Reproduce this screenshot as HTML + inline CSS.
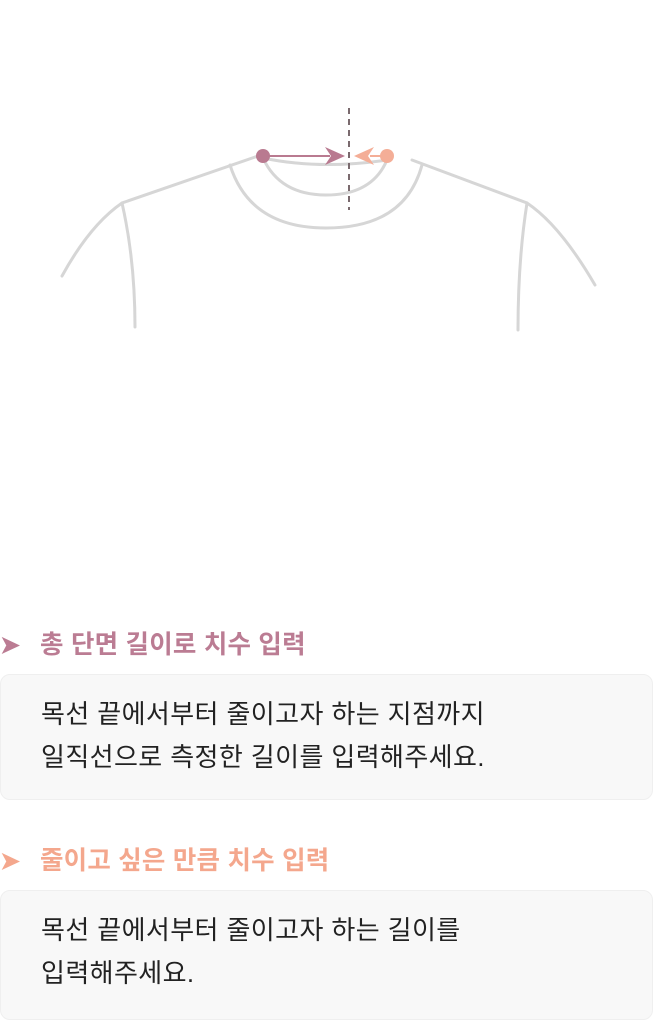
<!DOCTYPE html>
<html><head><meta charset="utf-8"><style>
body{margin:0;width:654px;height:1016px;background:#fff;font-family:"Liberation Sans","Noto Sans CJK KR",sans-serif;position:relative;overflow:hidden}
.h{position:absolute;left:0;font-size:25.5px;font-weight:bold;letter-spacing:0.2px;line-height:28px}
.h span{display:inline-block;width:40px;font-size:24px;letter-spacing:0}
.box{position:absolute;left:0;width:653px;background:#f8f8f8;border:1px solid #efefef;border-radius:10px;box-sizing:border-box;padding:18px 0 0 40px;font-size:26px;letter-spacing:0.4px;line-height:43px;color:#222}
</style></head><body>
<svg width="654" height="400" style="position:absolute;left:0;top:0" fill="none">
<g stroke="#d6d6d6" stroke-width="3" stroke-linecap="round">
<path d="M258 156 L122 203 Q90 225 62 276"/>
<path d="M122 203 Q135 260 135 327"/>
<path d="M412 160 L527 203 Q560 225 595 285"/>
<path d="M527 203 Q518 260 518 330"/>
<path d="M230 165 Q250 228 326 228 Q405 228 422 165"/>
<path d="M263 158 Q280 195 326 195 Q372 195 387 160"/>
<path d="M263 158 Q320 170 387 160"/>
</g>
<line x1="349" y1="108" x2="349" y2="210" stroke="#7a6a6e" stroke-width="2" stroke-dasharray="6,5"/>
<line x1="263" y1="156" x2="330" y2="156" stroke="#b97a90" stroke-width="2"/>
<path d="M325 147 L345 156 L325 165 L331 156Z" fill="#b97a90"/>
<circle cx="263" cy="156" r="7" fill="#b97a90"/>
<line x1="370" y1="156" x2="387" y2="156" stroke="#f4ae97" stroke-width="2"/>
<path d="M374 147 L354 156 L374 165 L368 156Z" fill="#f4ae97"/>
<circle cx="387" cy="156" r="7" fill="#f4ae97"/>
</svg>
<div class="h" style="top:631px;color:#bb7c93"><span>➤</span>총 단면 길이로 치수 입력</div>
<div class="box" style="top:674px;height:126px">목선 끝에서부터 줄이고자 하는 지점까지<br>일직선으로 측정한 길이를 입력해주세요.</div>
<div class="h" style="top:847px;color:#f4a78d"><span>➤</span>줄이고 싶은 만큼 치수 입력</div>
<div class="box" style="top:890px;height:130px">목선 끝에서부터 줄이고자 하는 길이를<br>입력해주세요.</div>
</body></html>
